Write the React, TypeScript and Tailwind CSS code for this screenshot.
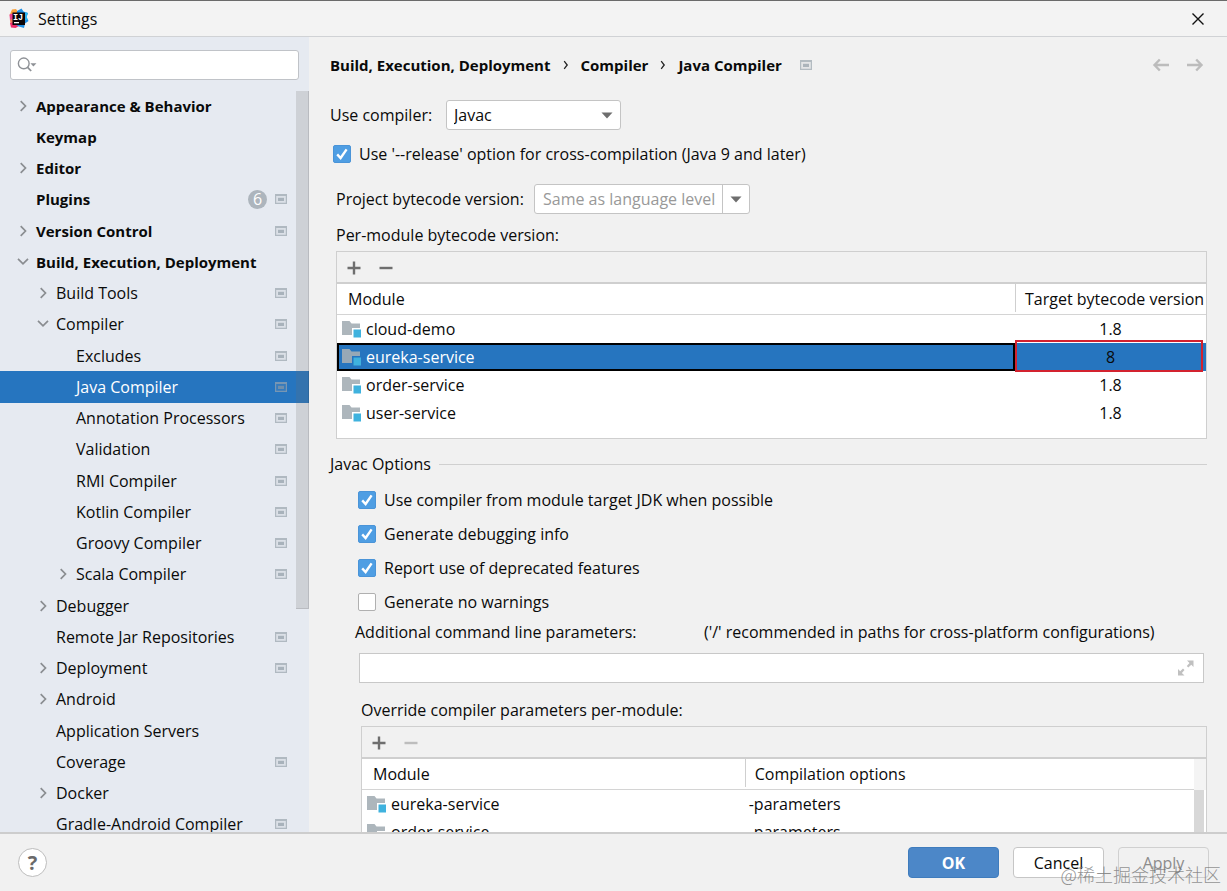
import React, { useId, useState } from "react";

type TreeItem = {
  label: string;
  level: 0 | 1 | 2;
  arrow?: "right" | "down";
  project?: boolean;
  badge?: number;
  selected?: boolean;
};

const TREE: TreeItem[] = [
  { label: "Appearance & Behavior", level: 0, arrow: "right" },
  { label: "Keymap", level: 0 },
  { label: "Editor", level: 0, arrow: "right" },
  { label: "Plugins", level: 0, badge: 6, project: true },
  { label: "Version Control", level: 0, arrow: "right", project: true },
  { label: "Build, Execution, Deployment", level: 0, arrow: "down" },
  { label: "Build Tools", level: 1, arrow: "right", project: true },
  { label: "Compiler", level: 1, arrow: "down", project: true },
  { label: "Excludes", level: 2, project: true },
  { label: "Java Compiler", level: 2, project: true, selected: true },
  { label: "Annotation Processors", level: 2, project: true },
  { label: "Validation", level: 2, project: true },
  { label: "RMI Compiler", level: 2, project: true },
  { label: "Kotlin Compiler", level: 2, project: true },
  { label: "Groovy Compiler", level: 2, project: true },
  { label: "Scala Compiler", level: 2, arrow: "right", project: true },
  { label: "Debugger", level: 1, arrow: "right" },
  { label: "Remote Jar Repositories", level: 1, project: true },
  { label: "Deployment", level: 1, arrow: "right", project: true },
  { label: "Android", level: 1, arrow: "right" },
  { label: "Application Servers", level: 1 },
  { label: "Coverage", level: 1, project: true },
  { label: "Docker", level: 1, arrow: "right" },
  { label: "Gradle-Android Compiler", level: 1, project: true },
];

const INDENT = { 0: "pl-4", 1: "pl-9", 2: "pl-14" };

function AppLogo() {
  return (
    <svg width="21" height="21" viewBox="0 0 21 21" aria-hidden="true">
      <path d="M4 1.500 8 1 10 4 6 9 1.500 7.500Z" fill="#f9a13c" />
      <path d="M1.500 6.500 6 5 8 12 2 12.500Z" fill="#ee3d8b" />
      <path d="M2 11.500 7 10 9 16 2.500 16.500Z" fill="#f4775a" />
      <path d="M2 15 8 14 11 18 7.500 20 3 19.500Z" fill="#ee2f6c" />
      <path d="M9 3 13.500 0.500 15.500 3.500 20 5 18.500 9 20.500 13 17 15.500 16 20 11 18.500 8 17Z" fill="#1d8fe6" />
      <path d="M16 4 20 5 18.500 9 20 12 16 12Z" fill="#2ab4f0" />
      <rect x="4.500" y="4.500" width="12.500" height="12.500" fill="#0b0508" />
      <text x="5" y="11.500" fontSize="8.500" fontWeight="700" fontFamily="Liberation Mono, monospace" fill="#fff">
        IJ
      </text>
      <rect x="6" y="14" width="5" height="1.3" fill="#fff" />
    </svg>
  );
}

function ProjectIcon() {
  return (
    <svg width="12" height="10" viewBox="0 0 12 10" aria-hidden="true" className="shrink-0 opacity-70">
      <rect width="12" height="10" fill="#9aa5ae" opacity="0.2" />
      <path d="M0 0H12V10H0ZM1.200 2V8.800H10.800V2Z" fill="#9aa5ae" fillRule="evenodd" />
      <rect x="3" y="3.800" width="6" height="3.200" fill="#8f9ba5" />
    </svg>
  );
}

function Chevron({ dir }: { dir: "right" | "down" }) {
  return (
    <svg width="14" height="14" viewBox="0 0 14 14" fill="none" stroke="#8a8d91" strokeWidth="1.7" aria-hidden="true">
      {dir === "right" ? <path d="M4.7 2.2 9.5 7 4.7 11.8" /> : <path d="M2 3.8 7 8.8 12 3.8" />}
    </svg>
  );
}

function CrumbSeparator() {
  return (
    <li className="flex w-[30px] items-center justify-center" aria-hidden="true">
      <svg width="6" height="10" viewBox="0 0 6 10" fill="none" stroke="#222" strokeWidth="1.3">
        <path d="M1.200 1.200 4.200 5 1.200 8.800" />
      </svg>
    </li>
  );
}

function Triangle() {
  return (
    <svg width="12" height="7" viewBox="0 0 12 7" aria-hidden="true">
      <path d="M0.5 0.5H11.5L6 6.5Z" fill="#6e6e6e" />
    </svg>
  );
}

function ModuleIcon() {
  return (
    <svg width="20" height="18" viewBox="0 0 20 18" aria-hidden="true" className="shrink-0">
      <path d="M0 1H7.5L9.5 3.5H18V8H10V15H0Z" fill="#a4aeb5" opacity="0.9" />
      <rect x="11.5" y="9.5" width="7.5" height="8" fill="#3fb2de" />
    </svg>
  );
}

function PlusIcon() {
  return (
    <svg width="14" height="14" viewBox="0 0 14 14" aria-hidden="true">
      <path d="M5.800 0.500H8.200V5.800H13.500V8.200H8.200V13.500H5.800V8.200H0.500V5.800H5.800Z" fill="#6e6e6e" />
    </svg>
  );
}

function MinusIcon({ muted }: { muted?: boolean }) {
  return (
    <svg width="14" height="14" viewBox="0 0 14 14" aria-hidden="true">
      <rect x="0.5" y="5.8" width="13" height="2.4" fill={muted ? "#bdbdbd" : "#6e6e6e"} />
    </svg>
  );
}

function Toolbar({ removeDisabled }: { removeDisabled?: boolean }) {
  return (
    <div className="flex h-8 items-center gap-[18px] border-b-2 border-[#cfcfcf] pt-[2px] pl-[10px]">
      <button type="button" aria-label="Add">
        <PlusIcon />
      </button>
      <button type="button" aria-label="Remove" disabled={removeDisabled}>
        <MinusIcon muted={removeDisabled} />
      </button>
    </div>
  );
}

function Check({ label, on }: { label: string; on?: boolean }) {
  const id = useId();
  const [checked, setChecked] = useState(!!on);
  return (
    <div className="flex h-5 items-center gap-2">
      <span className="grid size-[18px] shrink-0">
        <input
          id={id}
          type="checkbox"
          checked={checked}
          onChange={(e) => setChecked(e.target.checked)}
          className="col-start-1 row-start-1 size-[18px] appearance-none rounded-[2px] border border-[#b0b0b0] bg-white checked:border-[#4a94d8] checked:bg-[#4f9ee3]"
        />
        {checked && (
          <svg
            viewBox="0 0 18 18"
            className="pointer-events-none col-start-1 row-start-1 size-[18px]"
            fill="none"
            stroke="#fff"
            strokeWidth="2.4"
            aria-hidden="true"
          >
            <path d="M4.2 9.4 7.6 13 13.6 4.4" />
          </svg>
        )}
      </span>
      <label htmlFor={id}>{label}</label>
    </div>
  );
}

function Sidebar() {
  return (
    <aside className="relative flex w-[309px] shrink-0 flex-col overflow-hidden bg-[#e6eaf1]">
      <div className="px-[10px] pt-[13px] pb-[10px]">
        <div className="flex h-[30px] items-center rounded-[3px] border border-[#c0c3c8] bg-white pl-[6px]">
          <svg width="22" height="18" viewBox="0 0 22 18" aria-hidden="true">
            <circle cx="7.3" cy="7.3" r="5.8" fill="none" stroke="#8e9196" strokeWidth="1.5" />
            <path d="M11.5 11.5 15.3 15.5" stroke="#8e9196" strokeWidth="1.9" />
            <path d="M14.5 7H21L17.7 10.6Z" fill="#8e9196" />
          </svg>
          <input type="search" aria-label="Search settings" className="h-full w-full min-w-0 bg-transparent px-1 outline-none" />
        </div>
      </div>
      <nav aria-label="Settings categories">
        <ul className="grid h-[750px] auto-rows-fr">
          {TREE.map((t) => (
            <li key={t.label} className={t.selected ? "bg-[#2675bf] text-white" : ""}>
              <a
                href="#"
                aria-current={t.selected ? "page" : undefined}
                className={`flex h-full items-center pr-[22px] ${INDENT[t.level]}`}
              >
                <span className="flex w-5 shrink-0">{t.arrow && <Chevron dir={t.arrow} />}</span>
                <span className={`grow whitespace-nowrap ${t.level === 0 ? "text-[15px] font-bold" : ""}`}>{t.label}</span>
                {t.badge && (
                  <span className="mr-2 flex size-[19px] items-center justify-center rounded-full bg-[#adb5bd] text-white">
                    {t.badge}
                  </span>
                )}
                {t.project && <ProjectIcon />}
              </a>
            </li>
          ))}
        </ul>
      </nav>
      <div className="absolute top-[54px] right-0 h-[518px] w-[13px] border-r border-b border-black/10 bg-[#6e6e6e]/20" />
    </aside>
  );
}

function ModuleCell({ name }: { name: string }) {
  return (
    <span className="flex items-center gap-1 pl-[5px]">
      <ModuleIcon />
      {name}
    </span>
  );
}

function HeadDivider() {
  return <span className="absolute top-0 left-0 h-7 w-px bg-[#cfcfcf]" />;
}

const TARGETS = [
  { name: "cloud-demo", target: "1.8" },
  { name: "eureka-service", target: "8", selected: true },
  { name: "order-service", target: "1.8" },
  { name: "user-service", target: "1.8" },
];

function TargetTable() {
  return (
    <div className="border border-[#cfcfcf]">
      <Toolbar />
      <div className="bg-white pb-[11px]">
        <table className="w-full table-fixed border-separate border-spacing-0">
          <thead>
            <tr className="h-[31px] text-left">
              <th className="border-b border-[#d4d4d4] pl-[11px] font-normal">Module</th>
              <th className="relative w-[191px] border-b border-[#d4d4d4] pl-[10px] font-normal whitespace-nowrap">
                <HeadDivider />
                Target bytecode version
              </th>
            </tr>
          </thead>
          <tbody>
            {TARGETS.map((r) => (
              <tr key={r.name} className={`h-7 ${r.selected ? "bg-[#2675bf]" : ""}`}>
                <td className={r.selected ? "text-white outline-2 -outline-offset-2 outline-black" : ""}>
                  <ModuleCell name={r.name} />
                </td>
                <td className="relative text-center">
                  {r.target}
                  {r.selected && (
                    <span className="absolute -top-[3px] right-[3px] -bottom-px left-0 border-2 border-[#d3222f]" />
                  )}
                </td>
              </tr>
            ))}
          </tbody>
        </table>
      </div>
    </div>
  );
}

function OverrideTable() {
  return (
    <div className="border border-[#cfcfcf]">
      <Toolbar removeDisabled />
      <div className="flex bg-white">
        <table className="min-w-0 grow table-fixed border-separate border-spacing-0">
          <thead>
            <tr className="h-[31px] text-left">
              <th className="w-[46%] border-b border-[#d4d4d4] pl-[11px] font-normal">Module</th>
              <th className="relative border-b border-[#d4d4d4] pl-[10px] font-normal">
                <HeadDivider />
                Compilation options
              </th>
            </tr>
          </thead>
          <tbody>
            {["eureka-service", "order-service", "user-service"].map((m) => (
              <tr key={m} className="h-7">
                <td>
                  <ModuleCell name={m} />
                </td>
                <td className="pl-1">-parameters</td>
              </tr>
            ))}
          </tbody>
        </table>
        <div className="flex w-3 shrink-0 flex-col">
          <div className="h-[31px] bg-[#f4f4f4]" />
          <div className="mr-[2px] grow bg-[#d8d8d8]" />
        </div>
      </div>
    </div>
  );
}

function ArrowIcon({ flip }: { flip?: boolean }) {
  return (
    <svg
      width="18"
      height="14"
      viewBox="0 0 18 14"
      fill="none"
      stroke="#bcbcbc"
      strokeWidth="2.4"
      className={flip ? "rotate-180" : ""}
      aria-hidden="true"
    >
      <path d="M17 7H2.500M7.800 1.500 2.500 7l5.300 5.500" />
    </svg>
  );
}

function Content() {
  return (
    <main className="min-w-0 grow overflow-hidden bg-[#f1f1f1] pr-5 pl-[21px]">
      <header className="flex h-14 items-center justify-between pr-[3px]">
        <ol className="flex items-center text-[15px] font-bold whitespace-nowrap">
          <li>Build, Execution, Deployment</li>
          <CrumbSeparator />
          <li>Compiler</li>
          <CrumbSeparator />
          <li>Java Compiler</li>
          <li className="pl-[18px]">
            <ProjectIcon />
          </li>
        </ol>
        <div className="flex gap-4">
          <button type="button" aria-label="Back">
            <ArrowIcon />
          </button>
          <button type="button" aria-label="Forward">
            <ArrowIcon flip />
          </button>
        </div>
      </header>

      <div className="flex items-center pt-[7px]">
        <label htmlFor="compiler" className="w-[116px]">
          Use compiler:
        </label>
        <div className="relative w-[175px]">
          <select
            id="compiler"
            className="h-[30px] w-full appearance-none rounded-[3px] border border-[#c4c4c4] bg-white pl-[7px] outline-none"
          >
            <option>Javac</option>
            <option>Eclipse</option>
          </select>
          <span className="pointer-events-none absolute inset-y-0 right-2 flex items-center">
            <Triangle />
          </span>
        </div>
      </div>

      <div className="pt-[14px] pl-[3px]">
        <Check label="Use '--release' option for cross-compilation (Java 9 and later)" on />
      </div>

      <div className="flex items-center pt-5 pl-[6px]">
        <label htmlFor="bytecode" className="w-[198px]">
          Project bytecode version:
        </label>
        <div className="relative w-[216px]">
          <select
            id="bytecode"
            className="h-[30px] w-full appearance-none rounded-[3px] border border-[#c4c4c4] bg-white pl-2 text-[#999999] outline-none"
          >
            <option>Same as language level</option>
            <option>8</option>
          </select>
          <span className="pointer-events-none absolute inset-y-px right-px flex w-[27px] items-center justify-center border-l border-[#c4c4c4]">
            <Triangle />
          </span>
        </div>
      </div>

      <section className="pt-[11px] pl-[6px]">
        <h2 className="pb-[6px]">Per-module bytecode version:</h2>
        <TargetTable />
      </section>

      <fieldset className="pt-[15px]">
        <legend className="sr-only">Javac Options</legend>
        <div className="flex items-center gap-2">
          <span aria-hidden="true">Javac Options</span>
          <span className="h-px grow bg-[#d0d0d0]" />
        </div>
        <div className="flex flex-col gap-[14px] pt-4 pl-7">
          <Check label="Use compiler from module target JDK when possible" on />
          <Check label="Generate debugging info" on />
          <Check label="Report use of deprecated features" on />
          <Check label="Generate no warnings" />
        </div>
        <div className="flex pt-[10px] pl-[25px] whitespace-nowrap">
          <label htmlFor="params" className="w-[349px]">
            Additional command line parameters:
          </label>
          <span>('/' recommended in paths for cross-platform configurations)</span>
        </div>
        <div className="mt-[11px] mr-[3px] ml-[29px] flex h-[30px] items-center border border-[#c8c8c8] bg-white pr-2">
          <input id="params" type="text" className="h-full w-full min-w-0 bg-transparent px-2 outline-none" />
          <button type="button" aria-label="Expand">
            <svg width="18" height="16" viewBox="0 0 18 16" aria-hidden="true">
              <path d="M10 0.500H16.500V7L14.300 4.800 11.300 7.500 9.800 6 12.500 3Z" fill="#c0c0c0" />
              <path d="M7.500 15.500H1V9L3.200 11.200 6 8.600 7.500 10 4.900 13Z" fill="#c0c0c0" />
            </svg>
          </button>
        </div>
        <section className="pt-[17px] pl-[31px]">
          <h2 className="pb-[6px]">Override compiler parameters per-module:</h2>
          <OverrideTable />
        </section>
      </fieldset>
    </main>
  );
}

export default function App() {
  return (
    <div className="relative flex h-screen flex-col overflow-hidden bg-[#f1f1f1] font-['Open_Sans','Noto_Sans_CJK_SC',sans-serif] text-base leading-5 text-[#0a0a0a]">
      <header className="flex h-[37px] shrink-0 items-center gap-[9px] border-t border-b border-t-[#6a6a6a] border-b-[#d0d2d5] bg-[#f3f3f3] pr-[22px] pl-2">
        <AppLogo />
        <h1 className="grow">Settings</h1>
        <button type="button" aria-label="Close">
          <svg width="14" height="14" viewBox="0 0 14 14" stroke="#111" strokeWidth="1.4" aria-hidden="true">
            <path d="M1.500 1.500 12.500 12.500M12.500 1.500 1.500 12.500" />
          </svg>
        </button>
      </header>

      <div className="flex min-h-0 grow">
        <Sidebar />
        <Content />
      </div>

      <footer className="flex h-[59px] shrink-0 items-center border-t-2 border-[#cdcdcd] pr-[18px] pl-[18px]">
        <button
          type="button"
          aria-label="Help"
          className="flex size-[29px] items-center justify-center rounded-full border border-[#bdbdbd] bg-white text-xl font-bold text-[#6a6a6a]"
        >
          ?
        </button>
        <div className="ml-auto flex gap-[14px]">
          <button type="button" className="h-[31px] w-[91px] rounded-[4px] border border-[#3f7cbd] bg-[#4c87c8] font-bold text-white">
            OK
          </button>
          <button type="button" className="h-[31px] w-[91px] rounded-[4px] border border-[#c6c6c6] bg-white">
            Cancel
          </button>
          <button type="button" disabled className="h-[31px] w-[91px] rounded-[4px] border border-[#d0d0d0] text-[#8c8c8c]">
            Apply
          </button>
        </div>
      </footer>

      <span className="pointer-events-none absolute right-[6px] bottom-[5px] font-['Noto_Sans_CJK_SC',sans-serif] text-lg leading-6 font-light text-[#6e6e6e]/75">
        @稀土掘金技术社区
      </span>
    </div>
  );
}
